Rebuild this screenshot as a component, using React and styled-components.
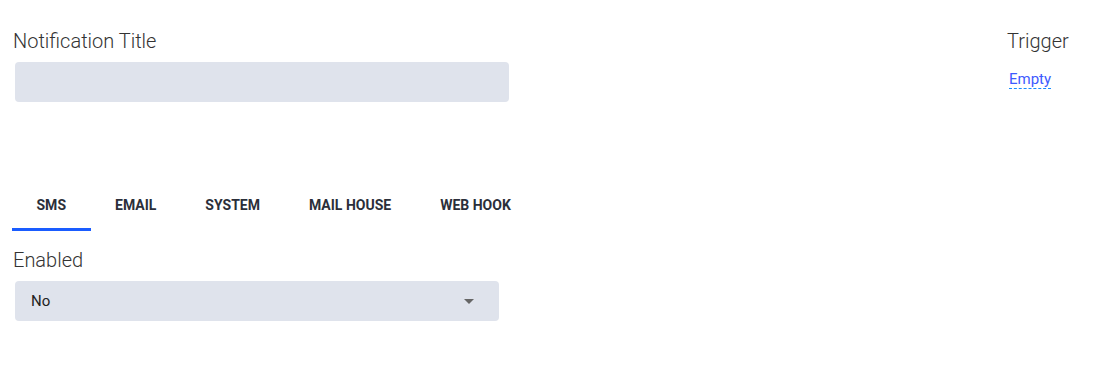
import React, { useState } from 'react';
import styled, { createGlobalStyle } from 'styled-components';

const GlobalStyle = createGlobalStyle`
  body {
    margin: 0;
    background: #fff;
    font-family: Roboto, "Liberation Sans", sans-serif;
  }
`;

const Page = styled.div`
  padding: 29px 13px 0 13px;
`;

const TopRow = styled.div`
  display: flex;
  justify-content: space-between;
  align-items: flex-start;
`;

const Field = styled.div`
  display: flex;
  flex-direction: column;
  width: ${(p) => p.width}px;
`;

const Label = styled.label`
  font-size: 20px;
  font-weight: 300;
  line-height: 24px;
  color: #333;
  margin-bottom: 9px;
`;

const Input = styled.input`
  box-sizing: border-box;
  height: 40px;
  margin-left: 2px;
  border: none;
  border-radius: 4px;
  background: #dfe3ec;
  padding: 0 16px;
  font: 15px Roboto, sans-serif;
  outline: none;
`;

const TriggerBox = styled.div`
  display: flex;
  flex-direction: column;
  width: 93px;
`;

const EmptyLink = styled.a`
  align-self: flex-start;
  margin: 8px 0 0 2px;
  font-size: 15px;
  line-height: 18px;
  color: #3d5afe;
  text-decoration: none;
  border-bottom: 1px dashed #1a8cff;
  cursor: pointer;
`;

const Tabs = styled.div`
  display: flex;
  margin: 82px 0 17px -1px;
`;

const Tab = styled.button`
  background: none;
  border: none;
  padding: 13px 24.5px 15px;
  font: 700 14px/16px Roboto, sans-serif;
  text-transform: uppercase;
  color: #2b2f3a;
  border-bottom: 3px solid ${(p) => (p.active ? '#1a5cff' : 'transparent')};
  cursor: pointer;
`;

const SelectBox = styled.div`
  box-sizing: border-box;
  height: 40px;
  margin-left: 2px;
  border-radius: 4px;
  background: #dfe3ec;
  padding: 0 25px 0 16px;
  display: flex;
  align-items: center;
  justify-content: space-between;
  font-size: 15px;
  color: #222;
`;

const Caret = styled.span`
  width: 0;
  height: 0;
  border-left: 5px solid transparent;
  border-right: 5px solid transparent;
  border-top: 5px solid #666;
`;

const tabs = ['SMS', 'Email', 'System', 'Mail House', 'Web Hook'];

export default function App() {
  const [active, setActive] = useState(0);
  return (
    <Page>
      <GlobalStyle />
      <TopRow>
        <Field width={496}>
          <Label>Notification Title</Label>
          <Input />
        </Field>
        <TriggerBox>
          <Label>Trigger</Label>
          <EmptyLink>Empty</EmptyLink>
        </TriggerBox>
      </TopRow>
      <Tabs>
        {tabs.map((t, i) => (
          <Tab key={t} active={i === active} onClick={() => setActive(i)}>
            {t}
          </Tab>
        ))}
      </Tabs>
      <Field width={486}>
        <Label>Enabled</Label>
        <SelectBox>
          No
          <Caret />
        </SelectBox>
      </Field>
    </Page>
  );
}
